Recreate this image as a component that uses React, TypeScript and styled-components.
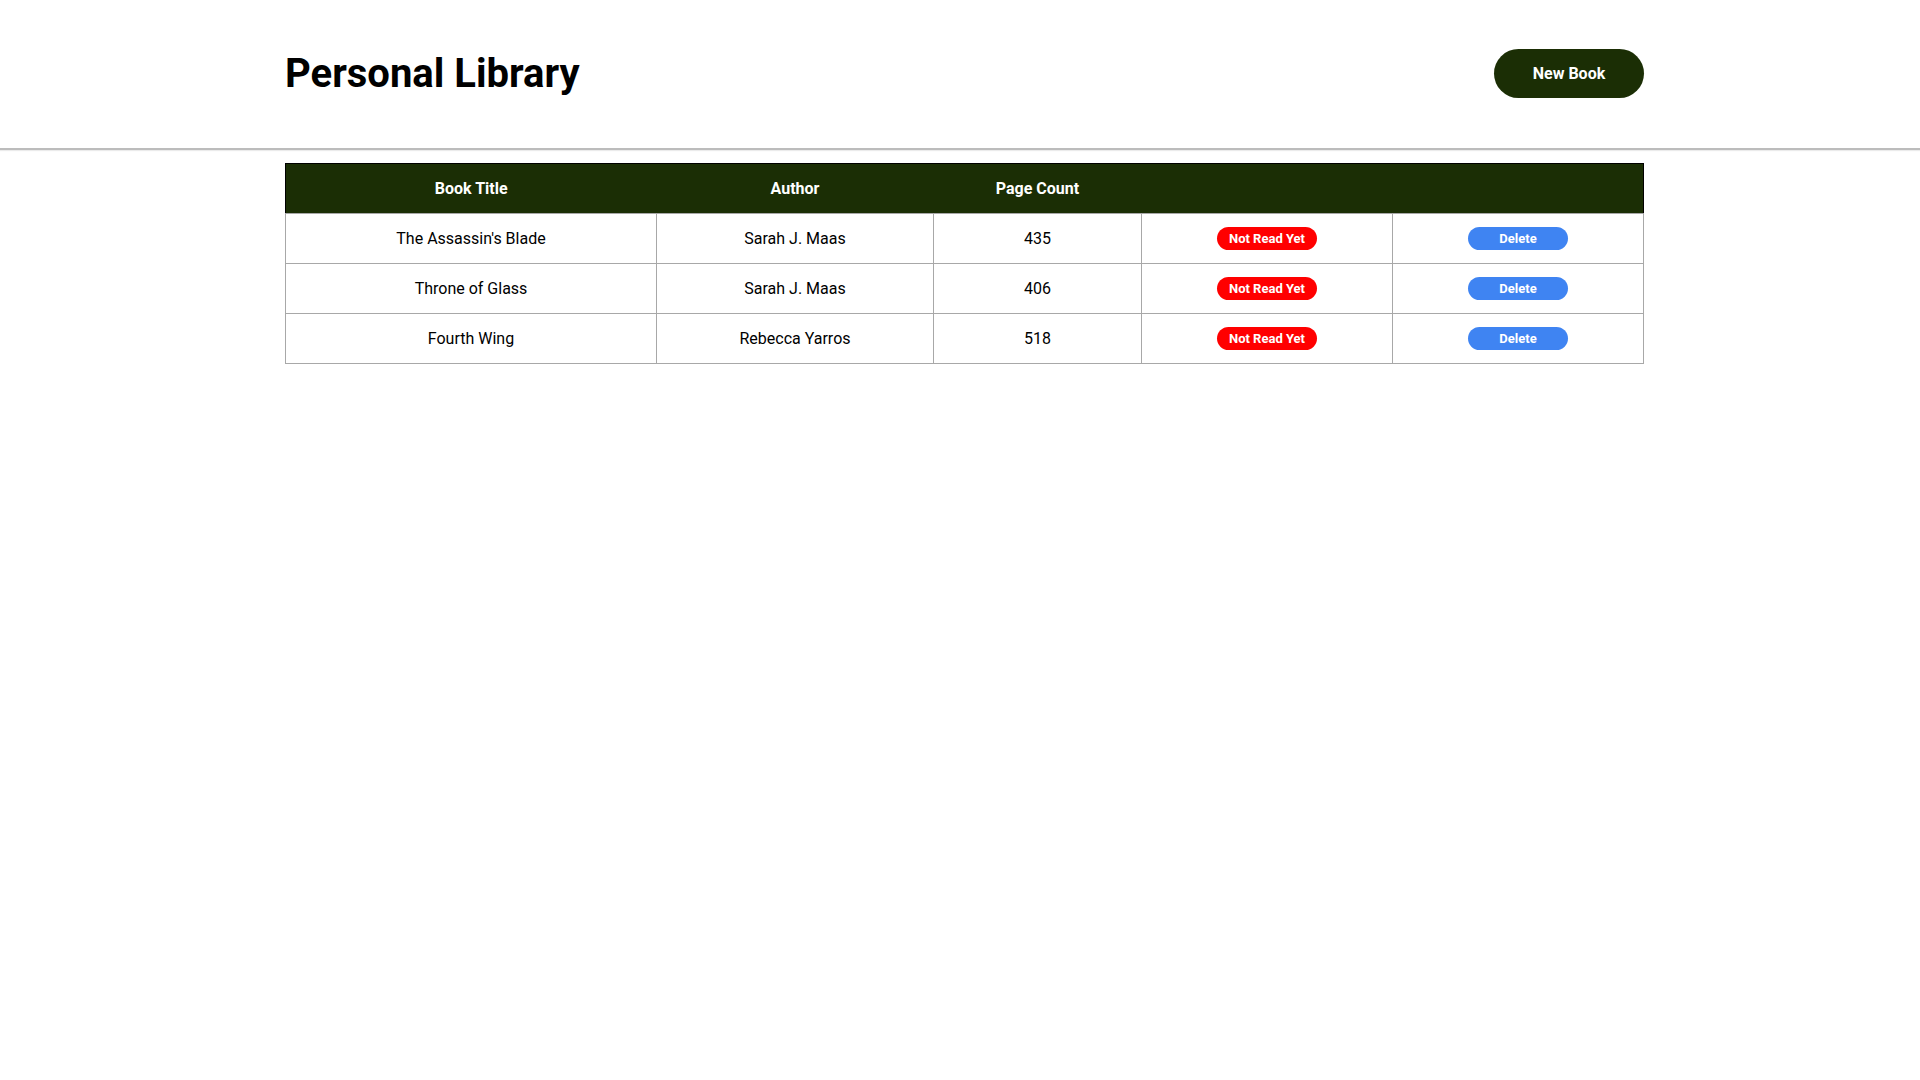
import React from "react";
import styled, { createGlobalStyle } from "styled-components";

const GlobalStyle = createGlobalStyle`
  html, body { margin: 0; padding: 0; background: #ffffff; }
  body { font-family: Roboto, "Liberation Sans", Arial, sans-serif; color: #000; }
  * { box-sizing: border-box; }
`;

const Header = styled.header`
  height: 150px;
  border-bottom: 2px solid #bcbcbc;
  box-shadow: 0 1px 1px rgba(0, 0, 0, 0.08);
`;

const HeaderInner = styled.div`
  width: 1359px;
  margin-left: 285px;
  height: 147px;
  display: flex;
  align-items: center;
  justify-content: space-between;
`;

const Title = styled.h1`
  margin: 0;
  font-size: 40px;
  font-weight: 700;
`;

const NewButton = styled.button`
  width: 150px;
  height: 49px;
  border: none;
  border-radius: 25px;
  background: #1b2e05;
  color: #fff;
  font-family: Roboto, "Liberation Sans", Arial, sans-serif;
  font-size: 16px;
  font-weight: 700;
  cursor: pointer;
`;

const Main = styled.main`
  width: 1359px;
  margin-left: 285px;
  padding-top: 13px;
`;

const Table = styled.table`
  width: 1359px;
  border-collapse: collapse;
  table-layout: fixed;
`;

const HeadRow = styled.tr`
  background: #1b2e05;
  border: 1px solid #000;
`;

const Th = styled.th`
  height: 50px;
  padding: 0;
  color: #fff;
  font-size: 16px;
  font-weight: 700;
  text-align: center;
`;

const Td = styled.td`
  height: 50px;
  padding: 0;
  border: 1px solid #a8a8a8;
  font-size: 16px;
  text-align: center;
  vertical-align: middle;
`;

const Pill = styled.button<{ $tone: "red" | "blue" }>`
  width: 100px;
  height: 23px;
  border: none;
  border-radius: 12px;
  background: ${(p) => (p.$tone === "red" ? "#ff0000" : "#3f84f2")};
  color: #fff;
  font-family: Roboto, "Liberation Sans", Arial, sans-serif;
  font-size: 13px;
  font-weight: 700;
  padding: 0;
  cursor: pointer;
  display: inline-flex;
  align-items: center;
  justify-content: center;
`;

const books = [
  { title: "The Assassin's Blade", author: "Sarah J. Maas", pages: 435 },
  { title: "Throne of Glass", author: "Sarah J. Maas", pages: 406 },
  { title: "Fourth Wing", author: "Rebecca Yarros", pages: 518 },
];

export default function App() {
  return (
    <>
      <GlobalStyle />
      <Header>
        <HeaderInner>
          <Title>Personal Library</Title>
          <NewButton>New Book</NewButton>
        </HeaderInner>
      </Header>
      <Main>
        <Table>
          <colgroup>
            <col style={{ width: 371 }} />
            <col style={{ width: 277 }} />
            <col style={{ width: 208 }} />
            <col style={{ width: 251 }} />
            <col style={{ width: 251 }} />
          </colgroup>
          <thead>
            <HeadRow>
              <Th>Book Title</Th>
              <Th>Author</Th>
              <Th>Page Count</Th>
              <Th />
              <Th />
            </HeadRow>
          </thead>
          <tbody>
            {books.map((b) => (
              <tr key={b.title}>
                <Td>{b.title}</Td>
                <Td>{b.author}</Td>
                <Td>{b.pages}</Td>
                <Td>
                  <Pill $tone="red">Not Read Yet</Pill>
                </Td>
                <Td>
                  <Pill $tone="blue">Delete</Pill>
                </Td>
              </tr>
            ))}
          </tbody>
        </Table>
      </Main>
    </>
  );
}
